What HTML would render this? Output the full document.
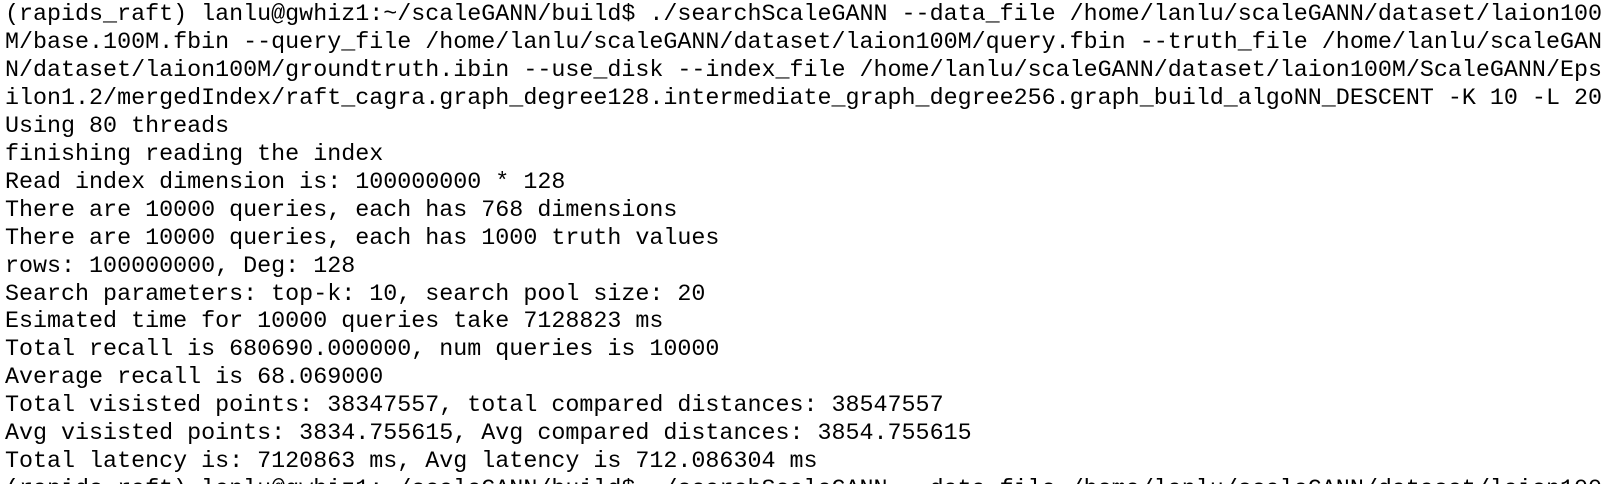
<!DOCTYPE html>
<html><head><meta charset="utf-8"><style>
html,body{margin:0;padding:0;background:#fff;width:1604px;height:484px;overflow:hidden}
pre{margin:0;padding:2px 0 0 5px;font-family:"Liberation Mono","DejaVu Sans Mono",monospace;font-size:23.35px;line-height:27.95px;color:#000;white-space:pre}
</style></head><body><pre>(rapids_raft) lanlu@gwhiz1:~/scaleGANN/build$ ./searchScaleGANN --data_file /home/lanlu/scaleGANN/dataset/laion100
M/base.100M.fbin --query_file /home/lanlu/scaleGANN/dataset/laion100M/query.fbin --truth_file /home/lanlu/scaleGAN
N/dataset/laion100M/groundtruth.ibin --use_disk --index_file /home/lanlu/scaleGANN/dataset/laion100M/ScaleGANN/Eps
ilon1.2/mergedIndex/raft_cagra.graph_degree128.intermediate_graph_degree256.graph_build_algoNN_DESCENT -K 10 -L 20
Using 80 threads
finishing reading the index
Read index dimension is: 100000000 * 128
There are 10000 queries, each has 768 dimensions
There are 10000 queries, each has 1000 truth values
rows: 100000000, Deg: 128
Search parameters: top-k: 10, search pool size: 20
Esimated time for 10000 queries take 7128823 ms
Total recall is 680690.000000, num queries is 10000
Average recall is 68.069000
Total visisted points: 38347557, total compared distances: 38547557
Avg visisted points: 3834.755615, Avg compared distances: 3854.755615
Total latency is: 7120863 ms, Avg latency is 712.086304 ms
(rapids_raft) lanlu@gwhiz1:~/scaleGANN/build$ ./searchScaleGANN --data_file /home/lanlu/scaleGANN/dataset/laion100</pre></body></html>
